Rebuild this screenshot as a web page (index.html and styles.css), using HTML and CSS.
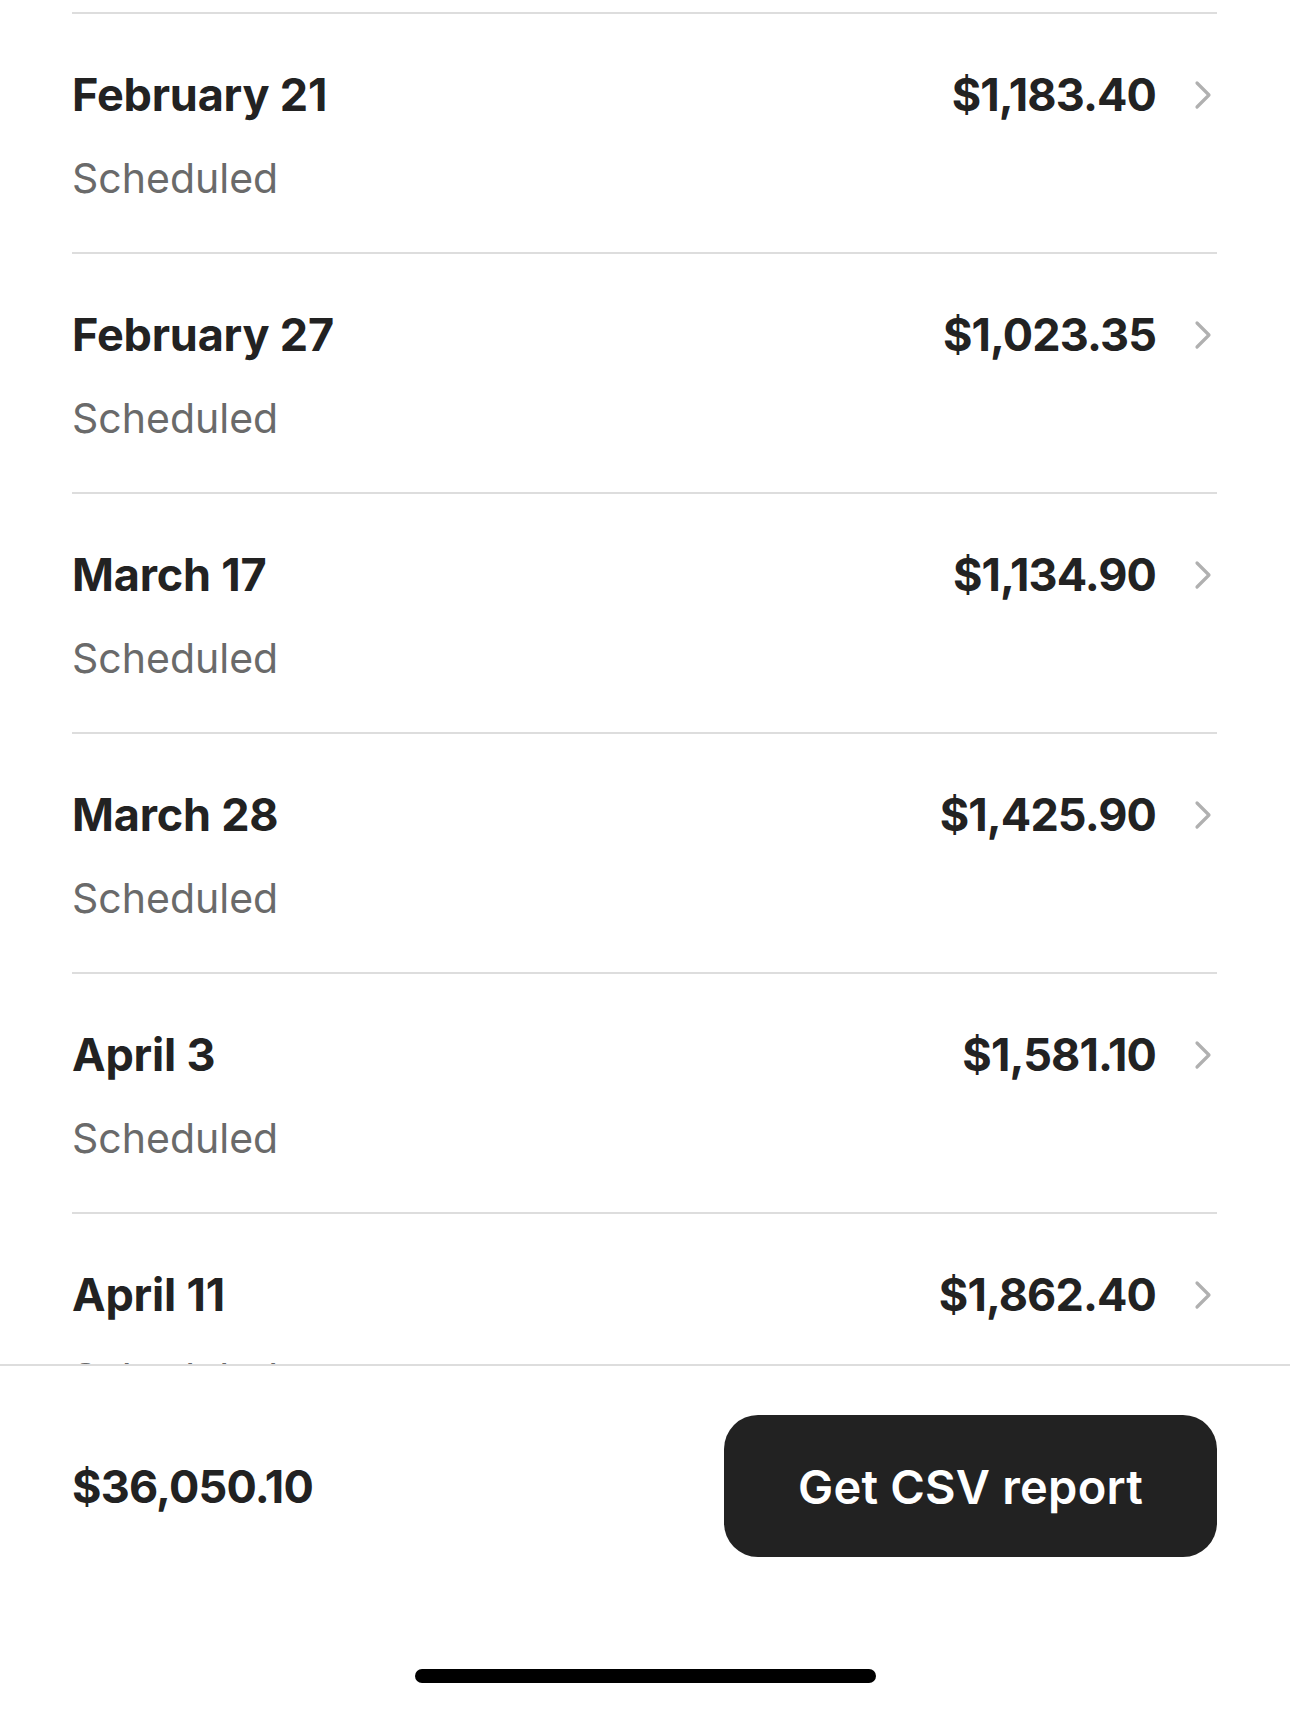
FILE: index.html
```html
<!DOCTYPE html>
<html>
<head>
<meta charset="utf-8">
<link rel="stylesheet" href="styles.css">
</head>
<body>
<div class="screen">
  <div class="list">
    <div class="row">
      <div class="row-main">
        <div class="date">February 21</div>
        <div class="amount-wrap"><span class="amount">$1,183.40</span><svg class="chev" viewBox="0 0 18 30"><path d="M3 3 L15 15 L3 27"/></svg></div>
      </div>
      <div class="status">Scheduled</div>
    </div>
    <div class="row">
      <div class="row-main">
        <div class="date">February 27</div>
        <div class="amount-wrap"><span class="amount">$1,023.35</span><svg class="chev" viewBox="0 0 18 30"><path d="M3 3 L15 15 L3 27"/></svg></div>
      </div>
      <div class="status">Scheduled</div>
    </div>
    <div class="row">
      <div class="row-main">
        <div class="date">March 17</div>
        <div class="amount-wrap"><span class="amount">$1,134.90</span><svg class="chev" viewBox="0 0 18 30"><path d="M3 3 L15 15 L3 27"/></svg></div>
      </div>
      <div class="status">Scheduled</div>
    </div>
    <div class="row">
      <div class="row-main">
        <div class="date">March 28</div>
        <div class="amount-wrap"><span class="amount">$1,425.90</span><svg class="chev" viewBox="0 0 18 30"><path d="M3 3 L15 15 L3 27"/></svg></div>
      </div>
      <div class="status">Scheduled</div>
    </div>
    <div class="row">
      <div class="row-main">
        <div class="date">April 3</div>
        <div class="amount-wrap"><span class="amount">$1,581.10</span><svg class="chev" viewBox="0 0 18 30"><path d="M3 3 L15 15 L3 27"/></svg></div>
      </div>
      <div class="status">Scheduled</div>
    </div>
    <div class="row">
      <div class="row-main">
        <div class="date">April 11</div>
        <div class="amount-wrap"><span class="amount">$1,862.40</span><svg class="chev" viewBox="0 0 18 30"><path d="M3 3 L15 15 L3 27"/></svg></div>
      </div>
      <div class="status">Scheduled</div>
    </div>
  </div>
  <div class="footer">
    <div class="footer-bar">
      <div class="total">$36,050.10</div>
      <button class="csv-btn">Get CSV report</button>
    </div>
    <div class="home-indicator"></div>
  </div>
</div>
</body>
</html>
```

FILE: styles.css
```css
* { box-sizing: border-box; }
html, body { margin: 0; padding: 0; background: #fff; }
body { font-family: Inter, "Noto Sans", sans-serif; color: #222222; }
.screen { width: 1290px; height: 1709px; display: flex; flex-direction: column; overflow: hidden; }
.list { height: 1364px; overflow: hidden; padding: 12px 73px 0 72px; flex: none; }
.row { height: 240px; border-top: 2px solid #dddddd; padding-top: 54px; }
.row-main { display: flex; justify-content: space-between; align-items: center; }
.date { font-size: 45px; font-weight: 700; line-height: 54px; letter-spacing: -0.2px; }
.amount-wrap { display: flex; align-items: center; gap: 38px; }
.amount { font-size: 45px; font-weight: 700; line-height: 54px; letter-spacing: -0.9px; }
.chev { width: 18px; height: 30px; margin-right: 5px; }
.chev path { fill: none; stroke: #b0b0b0; stroke-width: 3.2; stroke-linecap: round; stroke-linejoin: round; }
.status { margin-top: 32px; font-size: 41px; line-height: 48px; color: #6a6a6a; font-weight: 400; }
.footer { flex: 1; border-top: 2px solid #dddddd; background: #fff; display: flex; flex-direction: column; align-items: center; }
.footer-bar { width: 100%; padding: 49px 73px 0 72px; display: flex; justify-content: space-between; align-items: center; }
.total { font-size: 45px; font-weight: 700; letter-spacing: -0.8px; }
.csv-btn { width: 493px; height: 142px; border: none; border-radius: 34px; background: #222222; color: #fff; font-family: Inter, "Noto Sans", sans-serif; font-size: 47px; font-weight: 600; letter-spacing: 0.2px; }
.home-indicator { margin-top: 112px; width: 461px; height: 14px; border-radius: 7px; background: #000; }
```
